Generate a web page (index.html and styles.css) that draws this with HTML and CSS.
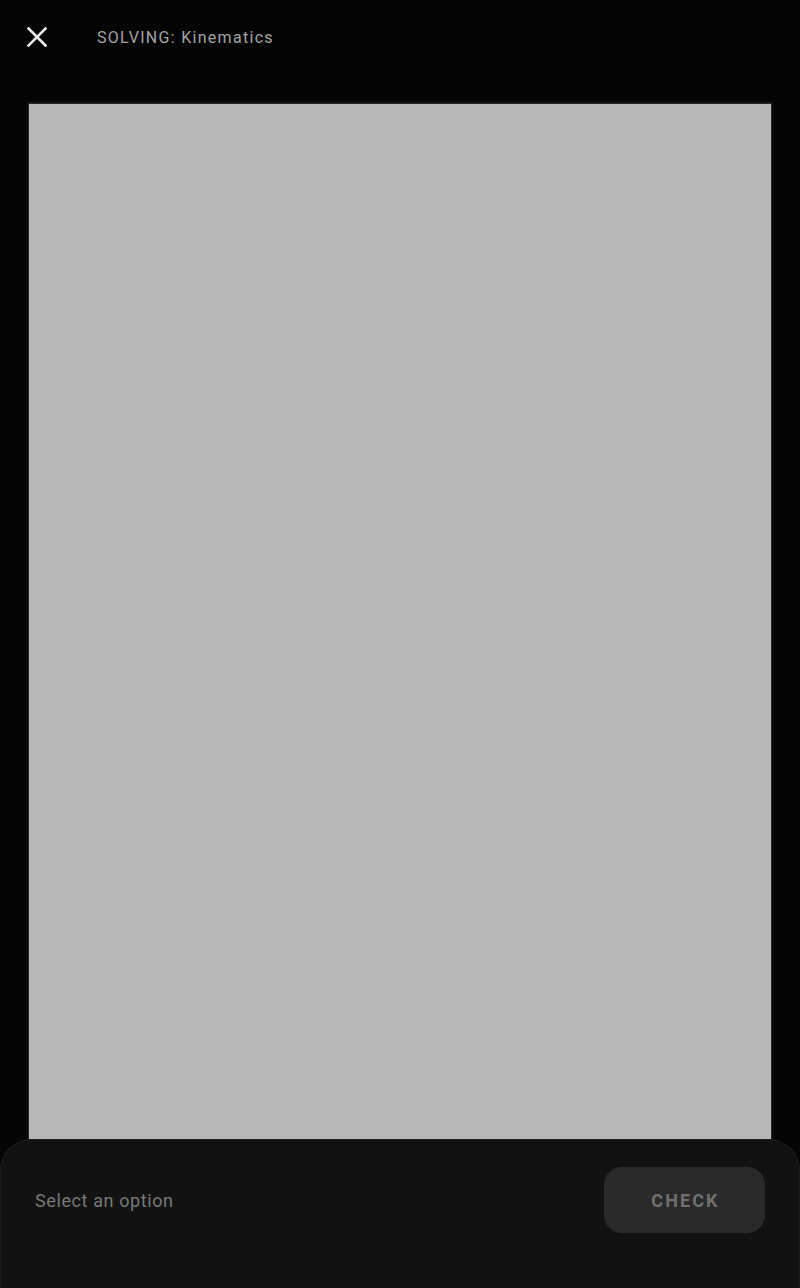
FILE: index.html
```html
<!DOCTYPE html>
<html>
<head>
<meta charset="utf-8">
<link rel="stylesheet" href="styles.css">
</head>
<body>
<div class="app">
  <header class="topbar">
    <button class="close" aria-label="Close">
      <svg width="20" height="20" viewBox="0 0 20 20"><path d="M1.5 1.5L18.5 18.5M18.5 1.5L1.5 18.5" stroke="#ececec" stroke-width="2.6" stroke-linecap="square" fill="none"/></svg>
    </button>
    <div class="title">SOLVING: Kinematics</div>
  </header>
  <main class="content">
    <div class="panel"></div>
  </main>
  <footer class="sheet">
    <div class="status">Select an option</div>
    <button class="check">CHECK</button>
  </footer>
</div>
</body>
</html>
```
FILE: styles.css
```css
html, body {
  margin: 0;
  padding: 0;
  background: #050505;
  font-family: Roboto, "Noto Sans", "Liberation Sans", sans-serif;
}
.app {
  width: 800px;
  height: 1288px;
  display: flex;
  flex-direction: column;
  overflow: hidden;
}
.topbar {
  height: 74px;
  display: flex;
  align-items: center;
  flex-shrink: 0;
}
.close {
  width: 20px;
  height: 20px;
  margin-left: 27px;
  padding: 0;
  border: 0;
  background: none;
  display: flex;
}
.title {
  margin-left: 50px;
  font-size: 16px;
  letter-spacing: 1.3px;
  color: #a3a3a3;
}
.content {
  padding: 30px 29px 0 29px;
  flex-shrink: 0;
}
.panel {
  height: 1035px;
  background: #b8b8b8;
  box-shadow: 0 0 0 1px #262626, 0 -1px 3px 1px #1a1a1a;
}
.sheet {
  flex: 1;
  background: #121212;
  border-radius: 32px 32px 0 0;
  box-shadow: inset 0 1px 0 #1f1f1f, inset 1px 0 0 #1c1c1c, inset -1px 0 0 #1c1c1c;
  display: flex;
  align-items: flex-start;
  justify-content: space-between;
  padding: 28px 35px 0 35px;
}
.status {
  height: 66px;
  display: flex;
  align-items: center;
  font-size: 18px;
  letter-spacing: 0.6px;
  color: #787878;
}
.check {
  width: 161px;
  height: 66px;
  border: 0;
  border-radius: 18px;
  background: #2a2a2a;
  color: #707070;
  font-family: Roboto, "Noto Sans", "Liberation Sans", sans-serif;
  font-weight: 700;
  font-size: 18px;
  letter-spacing: 2.1px;
  padding: 0 0 0 2px;
}
```
